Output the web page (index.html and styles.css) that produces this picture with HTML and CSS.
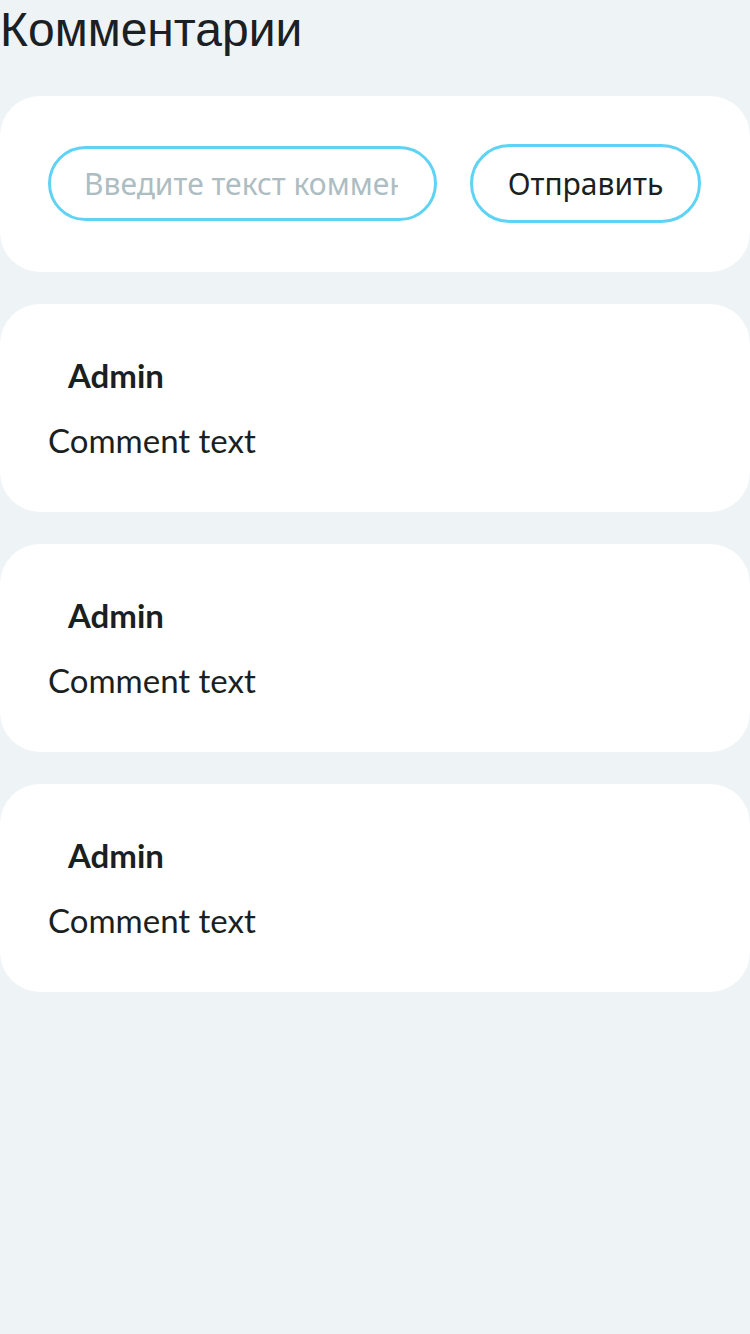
FILE: index.html
```html
<!DOCTYPE html>
<html lang="ru">
<head>
<meta charset="utf-8">
<title>Комментарии</title>
<link rel="stylesheet" href="styles.css">
</head>
<body>
<h1 class="title">Комментарии</h1>
<div class="list">
  <form class="card form-card">
    <input class="input" type="text" placeholder="Введите текст комментария">
    <button class="btn" type="button">Отправить</button>
  </form>
  <div class="card comment">
    <div class="name">Admin</div>
    <div class="text">Comment text</div>
  </div>
  <div class="card comment">
    <div class="name">Admin</div>
    <div class="text">Comment text</div>
  </div>
  <div class="card comment">
    <div class="name">Admin</div>
    <div class="text">Comment text</div>
  </div>
</div>
</body>
</html>
```
FILE: styles.css
```css
html, body {
  margin: 0;
  padding: 0;
  background: #eef3f6;
  min-height: 1334px;
}
body {
  font-family: "Lato", "Noto Sans", sans-serif;
  color: #1a1f22;
}
.title {
  margin: 0 0 36px;
  font-family: "Liberation Sans", Arial, sans-serif;
  font-weight: 400;
  font-size: 48px;
  line-height: 60px;
  color: #1a2024;
}
.list {
  display: flex;
  flex-direction: column;
  gap: 32px;
}
.card {
  background: #ffffff;
  border-radius: 40px;
}
.form-card {
  margin: 0;
  display: flex;
  align-items: center;
  gap: 33px;
  padding: 48px 49px 49px 48px;
}
.input {
  box-sizing: border-box;
  width: 389px;
  height: 75px;
  border: 3px solid #5fd3f3;
  border-radius: 40px;
  padding: 0 36px 0 33px;
  font-family: "Noto Sans", sans-serif;
  font-size: 30px;
  color: #1a1f22;
  outline: none;
  background: #fff;
}
.input::placeholder {
  color: #adbdc2;
}
.btn {
  box-sizing: border-box;
  flex: 1;
  height: 79px;
  border: 3px solid #5fd3f3;
  border-radius: 40px;
  background: #fff;
  font-family: "Noto Sans", sans-serif;
  font-size: 30px;
  color: #1a1f22;
  padding: 0;
}
.comment {
  display: flex;
  flex-direction: column;
  gap: 25px;
  padding: 51px 48px 52px;
}
.name {
  margin-left: 20px;
  font-weight: 700;
  font-size: 33px;
  line-height: 40px;
  color: #1a1f22;
}
.text {
  font-size: 33px;
  line-height: 40px;
  color: #1a1f22;
}
```
